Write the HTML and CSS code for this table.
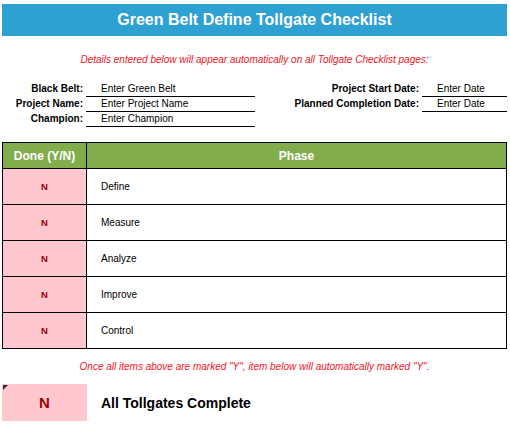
FILE: index.html
```html
<!DOCTYPE html>
<html>
<head>
<meta charset="utf-8">
<link rel="stylesheet" href="styles.css">
</head>
<body>
<div class="page">
  <h1 class="title">Green Belt Define Tollgate Checklist</h1>
  <p class="note note-top">Details entered below will appear automatically on all Tollgate Checklist pages:</p>
  <div class="fields">
    <div class="field-col left">
      <div class="field"><span class="label">Black Belt:</span><span class="value">Enter Green Belt</span></div>
      <div class="field"><span class="label">Project Name:</span><span class="value">Enter Project Name</span></div>
      <div class="field"><span class="label">Champion:</span><span class="value">Enter Champion</span></div>
    </div>
    <div class="field-col right">
      <div class="field"><span class="label">Project Start Date:</span><span class="value">Enter Date</span></div>
      <div class="field"><span class="label">Planned Completion Date:</span><span class="value">Enter Date</span></div>
    </div>
  </div>
  <table class="checklist">
    <thead>
      <tr><th class="done-col">Done (Y/N)</th><th>Phase</th></tr>
    </thead>
    <tbody>
      <tr><td class="done">N</td><td class="phase">Define</td></tr>
      <tr><td class="done">N</td><td class="phase">Measure</td></tr>
      <tr><td class="done">N</td><td class="phase">Analyze</td></tr>
      <tr><td class="done">N</td><td class="phase">Improve</td></tr>
      <tr><td class="done">N</td><td class="phase">Control</td></tr>
    </tbody>
  </table>
  <p class="note note-bottom">Once all items above are marked "Y", item below will automatically marked "Y".</p>
  <div class="summary">
    <div class="summary-box"><span class="comment-mark"></span>N</div>
    <div class="summary-text">All Tollgates Complete</div>
  </div>
</div>
</body>
</html>
```
FILE: styles.css
```css
* { box-sizing: border-box; }
html, body { margin: 0; padding: 0; background: #fff; }
body { font-family: "Liberation Sans", Arial, sans-serif; color: #000; }
.page { width: 510px; padding: 4px 3px 0 2px; }
.title {
  margin: 0;
  height: 32px;
  background: #2ea1d3;
  color: #fff;
  font-size: 16px;
  font-weight: bold;
  text-align: center;
  line-height: 32px;
}
.note {
  margin: 0;
  color: #f0141e;
  font-style: italic;
  font-size: 10px;
  text-align: center;
}
.note-top { margin-top: 18px; line-height: 12px; }
.fields {
  display: flex;
  justify-content: space-between;
  margin-top: 16px;
  height: 60px;
}
.field-col { display: flex; flex-direction: column; }
.field { display: flex; height: 15px; align-items: stretch; font-size: 10px; }
.label { font-weight: bold; text-align: right; padding-right: 3px; line-height: 14px; }
.value { border-bottom: 1px solid #000; line-height: 14px; padding-left: 15px; }
.left .label { width: 84px; }
.left .value { width: 169px; }
.right .label { width: 158px; }
.right .value { width: 85px; }
.checklist {
  width: 505px;
  border-collapse: collapse;
  font-size: 10px;
}
.checklist th, .checklist td { border: 1px solid #000; padding: 0; }
.checklist th {
  background: #82ad4d;
  color: #fff;
  font-weight: bold;
  font-size: 12px;
  height: 26px;
  text-align: center;
}
.checklist .done-col { width: 84px; }
.checklist td { height: 36px; }
.done {
  background: #ffc7ce;
  color: #9c0006;
  font-weight: bold;
  font-size: 9.5px;
  text-align: center;
}
.phase { padding-left: 14px !important; }
.note-bottom { margin-top: 12px; line-height: 12px; }
.summary { display: flex; align-items: center; margin-top: 11px; }
.summary-box {
  position: relative;
  width: 85px;
  height: 37px;
  background: #ffc7ce;
  color: #9c0006;
  font-weight: bold;
  font-size: 15px;
  display: flex;
  align-items: center;
  justify-content: center;
}
.comment-mark {
  position: absolute;
  left: 1px;
  top: 1px;
  width: 0;
  height: 0;
  border-top: 5px solid #333;
  border-right: 5px solid transparent;
}
.summary-text { margin-left: 14px; font-weight: bold; font-size: 14px; }
```
